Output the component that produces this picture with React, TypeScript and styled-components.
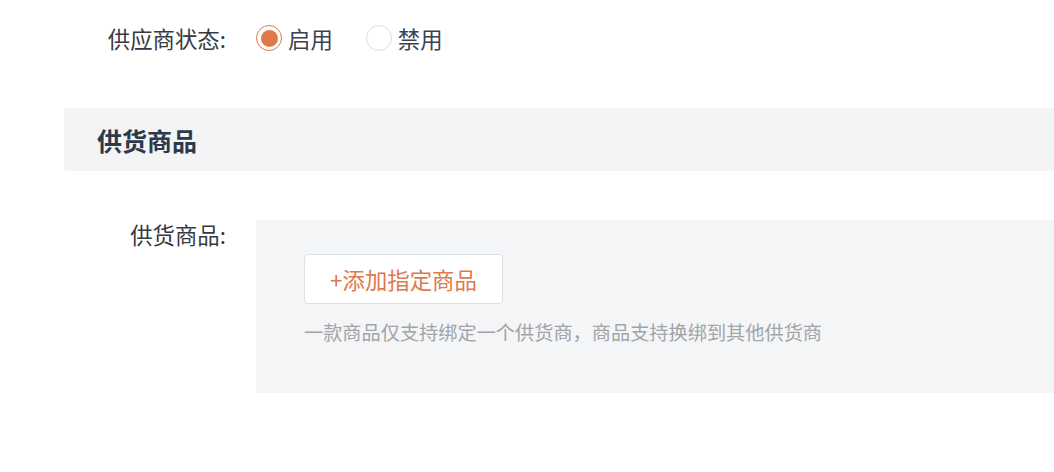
import styled, { createGlobalStyle } from "styled-components";

const GlobalStyle = createGlobalStyle`
  html, body {
    margin: 0;
    padding: 0;
    background: #ffffff;
    overflow: hidden;
  }

  body {
    font-family: "Noto Sans CJK SC", "Noto Sans", sans-serif;
  }
`;

const Page = styled.div`
  width: 1054px;
  height: 472px;
  padding-top: 25px;
  box-sizing: border-box;
`;

const FormRow = styled.div<{ $top?: number }>`
  display: flex;
  align-items: flex-start;
  margin-top: ${(p) => p.$top ?? 0}px;
  padding-left: 64px;
`;

const Label = styled.label<{ $lineHeight: number }>`
  width: 192px;
  padding-right: 30px;
  box-sizing: border-box;
  text-align: right;
  font-size: 22.4px;
  line-height: ${(p) => p.$lineHeight}px;
  color: #363a42;
  flex-shrink: 0;
`;

const RadioGroup = styled.div`
  display: flex;
  align-items: center;
  height: 26px;
  gap: 33px;
`;

const RadioItem = styled.span`
  display: inline-flex;
  align-items: center;
  gap: 6px;
  cursor: pointer;
`;

const RadioCircle = styled.span<{ $checked: boolean }>`
  width: 26px;
  height: 26px;
  box-sizing: border-box;
  border-radius: 50%;
  border: 1.5px solid ${(p) => (p.$checked ? "#e0784a" : "#dcdfe6")};
  background: #fff;
  display: inline-flex;
  align-items: center;
  justify-content: center;

  &::after {
    content: "";
    width: 17px;
    height: 17px;
    border-radius: 50%;
    background: #e0784a;
    display: ${(p) => (p.$checked ? "block" : "none")};
  }
`;

const RadioText = styled.span`
  font-size: 22.4px;
  line-height: 26px;
  color: #3a4150;
`;

const SectionBar = styled.div`
  margin: 57px 0 0 64px;
  height: 63px;
  padding-left: 33px;
  background: #f3f4f6;
  border-radius: 4px 0 0 4px;
  display: flex;
  align-items: center;
`;

const SectionTitle = styled.h2`
  margin: 0;
  font-size: 25px;
  font-weight: 700;
  color: #2d3a4b;
`;

const GoodsPanel = styled.div`
  flex: 1;
  height: 173px;
  box-sizing: border-box;
  padding: 34px 0 0 48px;
  background: #f4f5f7;
`;

const AddButton = styled.button`
  height: 50px;
  width: 199px;
  box-sizing: border-box;
  border: 1px solid #dcdfe6;
  border-radius: 4px;
  background: #fff;
  color: #e0784a;
  font-family: inherit;
  font-size: 22.4px;
  padding: 0;
  cursor: pointer;
`;

const Hint = styled.p`
  margin: 14px 0 0;
  font-size: 19.2px;
  line-height: 28px;
  color: #a2a4a8;
`;

export default function App() {
  return (
    <>
      <GlobalStyle />
      <Page>
        <FormRow>
          <Label $lineHeight={26}>供应商状态:</Label>
          <RadioGroup>
            <RadioItem>
              <RadioCircle $checked />
              <RadioText>启用</RadioText>
            </RadioItem>
            <RadioItem>
              <RadioCircle $checked={false} />
              <RadioText>禁用</RadioText>
            </RadioItem>
          </RadioGroup>
        </FormRow>

        <SectionBar>
          <SectionTitle>供货商品</SectionTitle>
        </SectionBar>

        <FormRow $top={49}>
          <Label $lineHeight={28}>供货商品:</Label>
          <GoodsPanel>
            <AddButton>+添加指定商品</AddButton>
            <Hint>一款商品仅支持绑定一个供货商，商品支持换绑到其他供货商</Hint>
          </GoodsPanel>
        </FormRow>
      </Page>
    </>
  );
}
